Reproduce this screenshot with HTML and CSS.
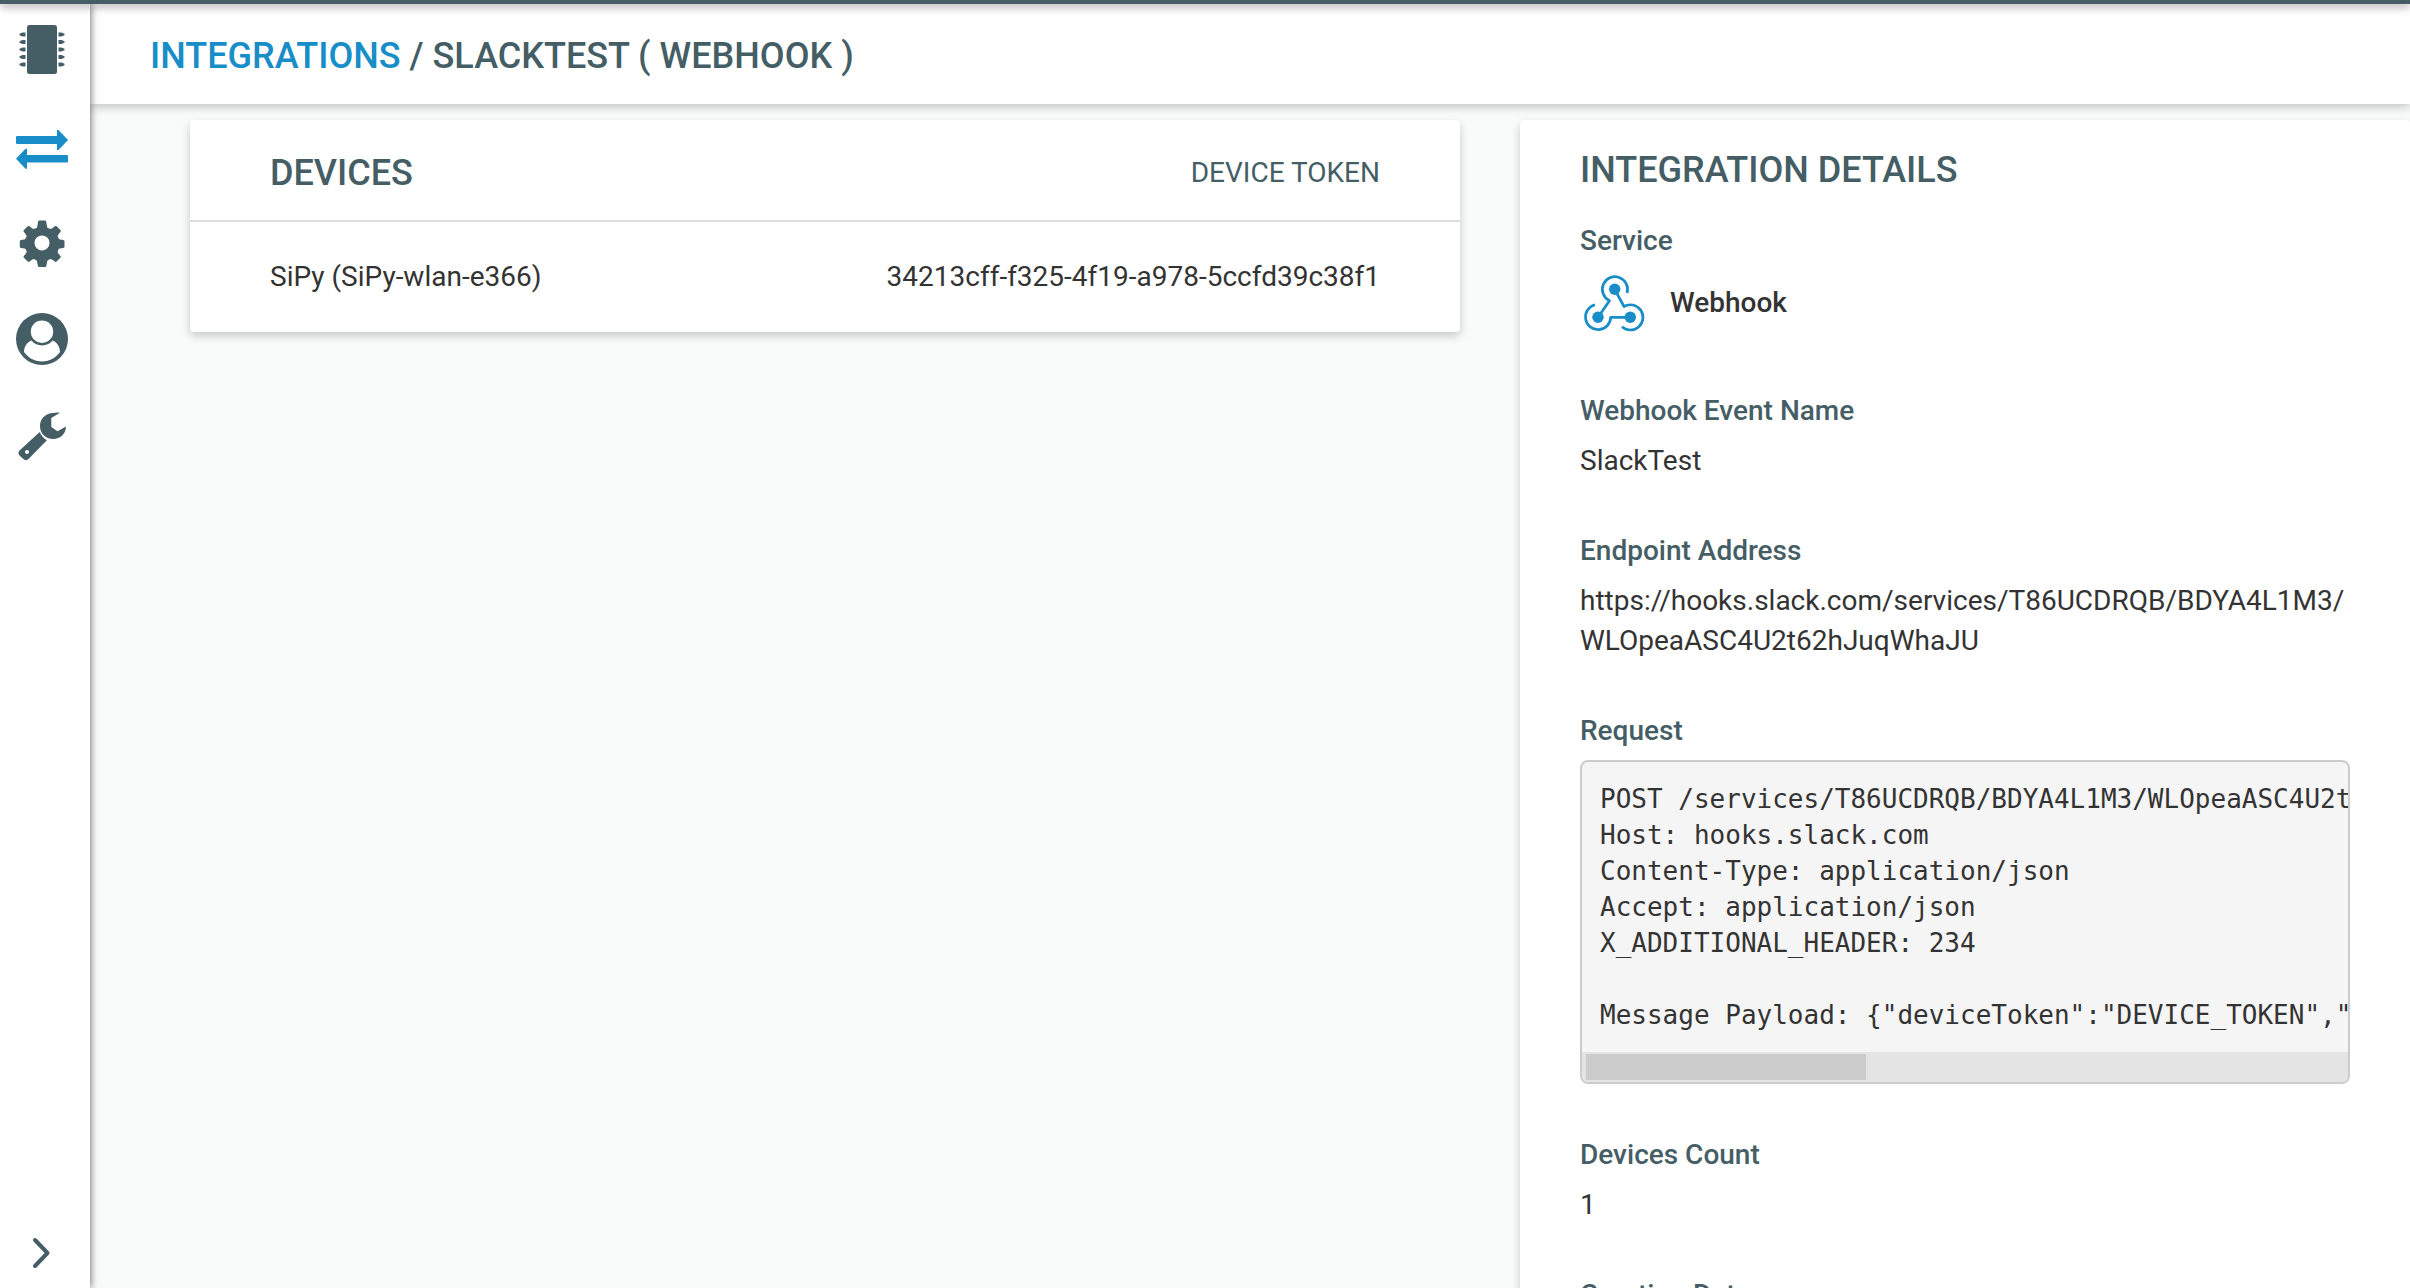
FILE: index.html
```html
<!DOCTYPE html>
<html lang="en">
<head>
<meta charset="utf-8">
<title>Integrations</title>
<link rel="stylesheet" href="styles.css">
</head>
<body>
<div class="topbar"></div>
<div class="shell">
  <nav class="sidebar">
    <svg class="nav-icon nav-chip" viewBox="0 0 56 56">
      <rect x="13" y="3" width="30" height="49" rx="2.5"/>
      <path d="M11.500 10.500v4h-3l-3-1.200v-1.600l3-1.200zM11.500 18v4h-3l-3-1.200v-1.600l3-1.200zM11.500 25.500v4h-3l-3-1.200v-1.600l3-1.200zM11.500 33v4h-3l-3-1.200v-1.600l3-1.200zM11.500 40.500v4h-3l-3-1.200v-1.600l3-1.200zM44.500 10.500v4h3l3-1.200v-1.600l-3-1.200zM44.500 18v4h3l3-1.200v-1.600l-3-1.200zM44.500 25.500v4h3l3-1.200v-1.600l-3-1.200zM44.500 33v4h3l3-1.200v-1.600l-3-1.200zM44.500 40.500v4h3l3-1.200v-1.600l-3-1.200z"/>
    </svg>
    <svg class="nav-icon nav-transfer" viewBox="0 0 56 56">
      <path d="M3 14h40V8h1.500l9.500 10-9.500 10H43v-6H3q-1 0-1-1v-6q0-1 1-1zM53 33q1 0 1 1v5.500q0 1-1 1H13v6.300h-1.500L2 36.800l9.500-10.100H13V33z"/>
    </svg>
    <svg class="nav-icon" viewBox="0 0 56 56">
      <path fill-rule="evenodd" d="M25 5.500h6q1 0 1.200 1l.9 5.500q.2 1 2 1.600t2.900-.2l2.700-2.100q1-.8 1.900 0l3.800 3.700q.8.800.1 1.700l-2.400 3.300q-.7 1 0 2.500t1.700 1.900l3.700.7q1 .2 1 1.200v5.400q0 1-1 1.200l-4 .7q-1 .3-1.500 1.900t0 2.400l2.400 3.200q.7 1 0 1.700l-3.800 3.700q-.9.800-1.800.1l-2.800-2.200q-1-.7-2.700 0t-2 1.600l-1 5q-.2 1-1.200 1h-6q-1 0-1.200-1l-1-5q-.2-1-1.900-1.600t-2.700 0l-2.800 2.200q-.9.700-1.800-.1l-3.800-3.700q-.8-.8 0-1.700l2.400-3.200q.6-.9 0-2.400t-1.500-1.900l-4-.7q-1-.2-1-1.200v-5.400q0-1 1-1.200l3.700-.7q1-.4 1.700-1.900t0-2.500l-2.400-3.300q-.7-.9.100-1.700l3.800-3.700q.9-.8 1.900 0l2.700 2.100q1 .8 2.800.2t2.100-1.600l.9-5.500q.2-1 1.100-1zM28 20.400a7.500 7.500 0 1 0 0 15a7.500 7.500 0 1 0 0-15z"/>
    </svg>
    <svg class="nav-icon nav-user" viewBox="0 0 56 56">
      <circle cx="28" cy="28" r="26"/>
      <circle class="cutout" cx="28" cy="20.700" r="11.200"/>
      <path class="cutout" d="M17.500 29.500c5 6.500 16 6.500 21 0c4.500 1.500 7.500 6.500 7.500 11.500c-3.500 5-10 9.500-18 9.500s-14.500-4.500-18-9.500c0-5 3-10 7.500-11.500z"/>
    </svg>
    <svg class="nav-icon" viewBox="0 0 56 56">
      <path d="M46 4.800L37.300 10v9l6.200 4.200L52 18.500c0 7-5.500 12.500-13 12.500S26 25.500 26 18 32 5 39 5q4-.9 7-.2z"/>
      <path fill-rule="evenodd" d="M25.700 24c1.500 3.500 4 6.500 7.200 8.300L14.500 51q-2.300 2.200-4.800.2L5.500 47.500q-2.200-2.400 0-5zM13 42a2 2 0 1 0 0 4a2 2 0 1 0 0-4z"/>
    </svg>
    <svg class="expand" viewBox="0 0 20 32"><path d="M3 3l12.500 13L3 29"/></svg>
  </nav>
  <div class="content">
    <header class="page-header">
      <h1 class="title"><a class="crumb">INTEGRATIONS</a> / SLACKTEST ( WEBHOOK )</h1>
    </header>
    <main class="columns">
      <section class="card devices">
        <div class="devices-head">
          <h2 class="title">DEVICES</h2>
          <span>DEVICE TOKEN</span>
        </div>
        <div class="devices-row">
          <span>SiPy (SiPy-wlan-e366)</span>
          <span>34213cff-f325-4f19-a978-5ccfd39c38f1</span>
        </div>
      </section>
      <section class="card details">
        <h2 class="title">INTEGRATION DETAILS</h2>
        <h3 class="label">Service</h3>
        <div class="service">
          <svg class="webhook" viewBox="0 0 68 60">
            <g class="webhook-lines">
              <path d="M47 21A12.600 12.600 0 1 0 29.500 28.700L18 45.300"/>
              <path d="M34.700 17.300L44 34.500A12.600 12.600 0 1 1 42 54.800"/>
              <path d="M50.300 45.300H30.700A12.600 12.600 0 1 1 15 32.800"/>
            </g>
            <circle cx="34.700" cy="17.300" r="5.700"/>
            <circle cx="18" cy="45.300" r="5.700"/>
            <circle cx="50.300" cy="45.300" r="5.700"/>
          </svg>
          <strong class="service-name">Webhook</strong>
        </div>
        <h3 class="label">Webhook Event Name</h3>
        <p class="value">SlackTest</p>
        <h3 class="label">Endpoint Address</h3>
        <p class="value">https://hooks.slack.com/services/T86UCDRQB/BDYA4L1M3/<wbr>WLOpeaASC4U2t62hJuqWhaJU</p>
        <h3 class="label">Request</h3>
        <div class="request">
          <pre class="code">POST /services/T86UCDRQB/BDYA4L1M3/WLOpeaASC4U2t
Host: hooks.slack.com
Content-Type: application/json
Accept: application/json
X_ADDITIONAL_HEADER: 234

Message Payload: {"deviceToken":"DEVICE_TOKEN","</pre>
          <div class="track"><div class="thumb"></div></div>
        </div>
        <h3 class="label">Devices Count</h3>
        <p class="value">1</p>
        <h3 class="label">Creation Date</h3>
      </section>
    </main>
  </div>
</div>
</body>
</html>
```
FILE: styles.css
```css
* { box-sizing: border-box; margin: 0; padding: 0; }

body {
  height: 100vh;
  overflow: hidden;
  display: flex;
  flex-direction: column;
  background: #f9fbfa;
  color: #333;
  font: 28px/40px Roboto, "Liberation Sans", sans-serif;
}

.topbar {
  flex: none;
  height: 4px;
  background: #455e66;
  box-shadow: 0 2px 8px rgba(0, 0, 0, .5);
  position: relative;
  z-index: 3;
}

.shell { flex: 1; min-height: 0; display: flex; }

.sidebar {
  width: 90px;
  flex: none;
  padding: 18px 0 19px 14px;
  display: flex;
  flex-direction: column;
  background: #fff;
  box-shadow: 0 0 8px rgba(0, 0, 0, .65);
  position: relative;
  z-index: 2;
}

.nav-icon { width: 56px; height: 56px; margin-bottom: 40px; fill: #455e66; flex: none; }
.nav-chip { margin-bottom: 44px; }
.nav-transfer { margin-bottom: 37px; fill: #188dc8; }
.nav-user { margin-bottom: 41px; }
.cutout { fill: #fff; }

.expand {
  width: 20px;
  height: 32px;
  margin: auto 0 0 18px;
  fill: none;
  stroke: #455e66;
  stroke-width: 4;
  stroke-linecap: round;
  stroke-linejoin: round;
}

.content { flex: 1; min-width: 0; display: flex; flex-direction: column; }

.page-header {
  flex: none;
  height: 100px;
  padding: 32px 60px;
  background: #fff;
  box-shadow: 0 2px 10px rgba(0, 0, 0, .26);
}

.title { font-size: 36px; line-height: 40px; font-weight: 500; color: #455e66; }
.crumb { color: #188dc8; }

.columns {
  flex: 1;
  min-height: 0;
  display: flex;
  align-items: flex-start;
  gap: 60px;
  padding: 16px 0 0 100px;
}

.card { background: #fff; border-radius: 4px; box-shadow: 0 4px 10px rgba(0, 0, 0, .2); }
.devices { flex: none; width: 1270px; }

.devices-head {
  height: 102px;
  padding: 5px 80px 0;
  display: flex;
  justify-content: space-between;
  align-items: center;
  border-bottom: 2px solid #dcdcdc;
  color: #455e66;
}

.devices-row { height: 110px; padding: 0 80px; display: flex; justify-content: space-between; align-items: center; }

.details { flex: 1; min-width: 0; padding: 30px 60px 60px; }
.label { margin-top: 50px; font-size: 28px; font-weight: 500; color: #455e66; }
.title + .label { margin-top: 31px; }
.value { margin-top: 10px; }

.service { display: flex; align-items: center; gap: 22px; height: 60px; margin: 11px 0 59px; }
.service + .label { margin-top: 0; }
.service-name { font-weight: 500; padding-top: 2px; }
.webhook { flex: none; width: 68px; height: 60px; fill: #188dc8; }
.webhook-lines { fill: none; stroke: #188dc8; stroke-width: 2.7; stroke-linejoin: round; }

.request {
  height: 324px;
  margin-top: 9px;
  overflow: hidden;
  border: 2px solid #ccc;
  border-radius: 8px;
  background: #f5f5f5;
  display: flex;
  flex-direction: column;
}
.request + .label { margin-top: 51px; }

.code {
  flex: 1;
  padding: 19px 0 0 18px;
  overflow: hidden;
  font: 26px/36px "DejaVu Sans Mono", monospace;
}

.track { height: 30px; padding: 2px 4px; background: #e4e4e4; }
.thumb { width: 280px; height: 26px; background: #ccc; }
```
